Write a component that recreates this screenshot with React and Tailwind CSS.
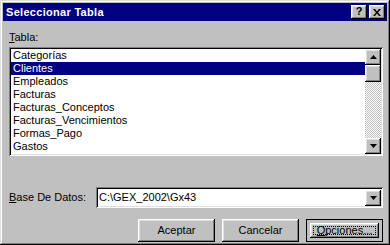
import React from 'react';

const raised =
  'shadow-[inset_-1px_-1px_#000,inset_1px_1px_#fff,inset_-2px_-2px_#808080,inset_2px_2px_#dfdfdf]';
const sunken =
  'shadow-[inset_1px_1px_#808080,inset_-1px_-1px_#fff,inset_2px_2px_#000,inset_-2px_-2px_#dfdfdf]';

const tables = [
  'Categorías',
  'Clientes',
  'Empleados',
  'Facturas',
  'Facturas_Conceptos',
  'Facturas_Vencimientos',
  'Formas_Pago',
  'Gastos',
];

function Arrow({ down }) {
  return (
    <svg width="7" height="4" viewBox="0 0 7 4">
      <path d={down ? 'M0 0h7L3.5 4z' : 'M3.5 0L7 4H0z'} fill="#000" />
    </svg>
  );
}

function ScrollBtn({ down }) {
  return (
    <div className={`w-[16px] h-[16px] bg-[#c0c0c0] flex items-center justify-center ${raised}`}>
      <Arrow down={down} />
    </div>
  );
}

function Button({ children, isDefault }) {
  return (
    <button
      className={`w-[77px] h-[23px] bg-[#c0c0c0] text-[11px] text-black flex items-center justify-center ${
        isDefault ? 'border border-black p-[3px]' : ''
      } ${isDefault ? '' : raised}`}
    >
      {isDefault ? (
        <span className={`w-full h-full flex items-center justify-center ${raised} p-[3px]`}>
          <span className="w-full h-full flex items-center justify-center border border-dotted border-black">
            {children}
          </span>
        </span>
      ) : (
        children
      )}
    </button>
  );
}

export default function App() {
  return (
    <div
      className={`w-[390px] h-[245px] bg-[#c0c0c0] p-[3px] flex flex-col shadow-[inset_-1px_-1px_#000,inset_1px_1px_#dfdfdf,inset_-2px_-2px_#808080,inset_2px_2px_#fff] select-none`}
      style={{ fontFamily: '"Liberation Sans", Arial, sans-serif' }}
    >
      {/* Title bar */}
      <div className="h-[18px] bg-[#000080] flex items-center pl-[3px] pr-[2px]">
        <span className="text-white font-bold text-[11px] tracking-[0.3px] leading-none">
          Seleccionar Tabla
        </span>
        <div className="ml-auto flex gap-[2px]">
          <div className={`w-[16px] h-[14px] bg-[#c0c0c0] flex items-center justify-center ${raised}`}>
            <span className="text-[11px] font-bold leading-none text-black -mt-[1px]">?</span>
          </div>
          <div className={`w-[16px] h-[14px] bg-[#c0c0c0] flex items-center justify-center ${raised}`}>
            <svg width="8" height="7" viewBox="0 0 8 7">
              <path d="M0 0h2l2 2.5L6 0h2L5 3.5 8 7H6L4 4.5 2 7H0l3-3.5z" fill="#000" />
            </svg>
          </div>
        </div>
      </div>

      {/* Body */}
      <div className="flex-1 flex flex-col pl-[6px] pr-[4px] text-[11px] text-black">
        <div className="mt-[9px] h-[14px] leading-[14px]">
          <span className="underline underline-offset-[1px]">T</span>abla:
        </div>
        <div className={`mt-[3px] h-[109px] bg-white p-[2px] flex ${sunken}`}>
          <div className="flex-1 flex flex-col">
            {tables.map((t) => (
              <div
                key={t}
                className={`h-[13px] leading-[13px] pl-[2px] ${
                  t === 'Clientes' ? 'bg-[#000080] text-white' : ''
                }`}
              >
                {t}
              </div>
            ))}
          </div>
          <div className="w-[16px] flex flex-col">
            <ScrollBtn />
            <div className={`h-[17px] bg-[#c0c0c0] ${raised}`} />
            <div className="flex-1 [background:repeating-conic-gradient(#c0c0c0_0%_25%,#fff_0%_50%)_0_0/2px_2px]" />
            <ScrollBtn down />
          </div>
        </div>

        <div className="mt-[31px] flex items-center">
          <div className="w-[87px]">
            <span className="underline underline-offset-[1px]">B</span>ase De Datos:
          </div>
          <div className={`flex-1 h-[21px] bg-white p-[2px] flex items-center ${sunken}`}>
            <span className="flex-1 pl-[1px]">C:\GEX_2002\Gx43</span>
            <ScrollBtn down />
          </div>
        </div>

        <div className="mt-[11px] flex justify-end gap-[7px]">
          <Button>Aceptar</Button>
          <Button>Cancelar</Button>
          <Button isDefault>
            <span>
              <span className="underline underline-offset-[1px]">O</span>pciones...
            </span>
          </Button>
        </div>
      </div>
    </div>
  );
}
